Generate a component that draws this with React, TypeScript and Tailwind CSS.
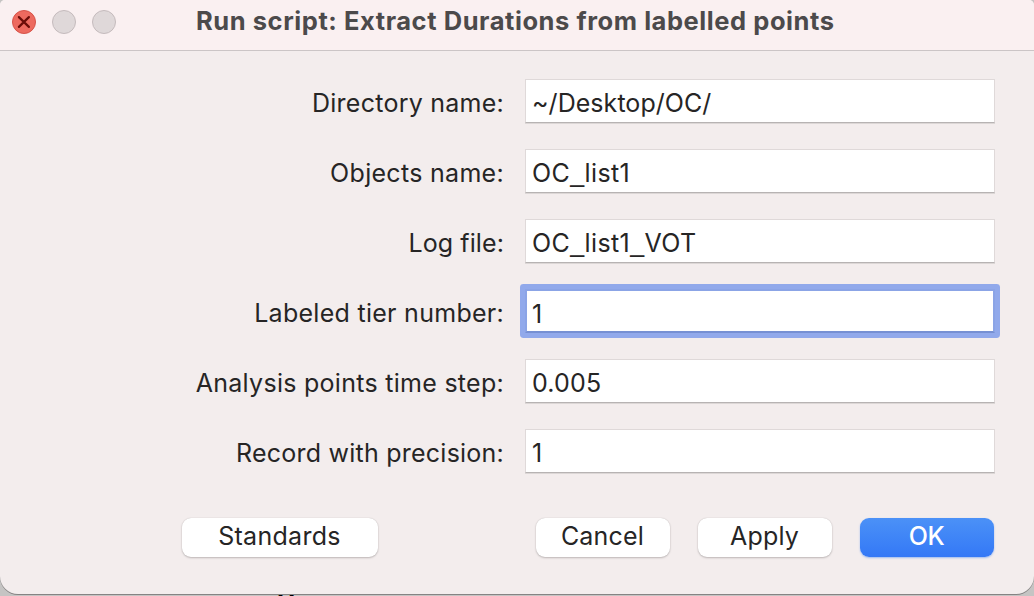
import type { ReactNode } from "react";
import clsx from "clsx";

type Field = { label: string; value: ReactNode; tracking: string; valueTracking: string; focused?: boolean };

function Underscore() {
  return <span className="font-['Liberation_Sans',sans-serif]">_</span>;
}

const fields: Field[] = [
  { label: "Directory name:", value: "~/Desktop/OC/", tracking: "tracking-[0.25px]", valueTracking: "tracking-[0.05px]" },
  { label: "Objects name:", value: <>OC<Underscore />list1</>, tracking: "tracking-[0.3px]", valueTracking: "tracking-[0.4px]" },
  { label: "Log file:", value: <>OC<Underscore />list1<Underscore />VOT</>, tracking: "tracking-[0.1px]", valueTracking: "tracking-[0.4px]" },
  { label: "Labeled tier number:", value: "1", tracking: "tracking-[0.28px]", valueTracking: "tracking-normal", focused: true },
  { label: "Analysis points time step:", value: "0.005", tracking: "tracking-[0.28px]", valueTracking: "tracking-[0.2px]" },
  { label: "Record with precision:", value: "1", tracking: "tracking-[0.23px]", valueTracking: "tracking-normal" },
];

function FieldRow({ label, value, tracking, valueTracking, focused }: Field) {
  return (
    <div className="flex h-11 items-center">
      <label className={clsx("w-[504px] text-right leading-[44px] whitespace-nowrap pt-[3px]", tracking)}>{label}</label>
      <div
        className={clsx(
          "ml-[21px] h-[44px] w-[470px] shrink-0 border bg-white leading-[46px] whitespace-nowrap",
          focused
            ? "rounded-[1px] border-2 border-[#8ba4e6] border-b-[#7690d3] pl-[5px] leading-[44px] shadow-[0_0_0_5px_#91a9eb]"
            : "border-[#dfd9d9] border-b-[#b7b3b3] pl-[6px] shadow-[0_1px_0_#dcd7d6]",
          valueTracking,
        )}
      >
        {value}
      </div>
    </div>
  );
}

function DialogButton({ children, className, primary }: { children: ReactNode; className: string; primary?: boolean }) {
  return (
    <button
      type="button"
      className={clsx(
        "h-[39px] shrink-0 rounded-[9px] pr-px pb-[2px] leading-[37px]",
        primary
          ? "bg-linear-to-b from-[#4b91f7] to-[#3478f6] font-medium text-white shadow-[0_1px_2px_#9dbbf0]"
          : "bg-white shadow-[0_0_1px_#bdb7b7,0_1px_2px_#bdb7b7]",
        className,
      )}
    >
      {children}
    </button>
  );
}

export default function App() {
  return (
    <div className="relative h-[596px] w-[1034px] overflow-hidden bg-[#c5c4c3] font-['Inter',sans-serif] text-[25px] font-[440] text-[#262525]">
      <div className="absolute top-[589px] left-[277px] text-[26px] leading-[26px] font-bold tracking-[3px] text-black">lf</div>
      <div className="relative flex h-[594px] flex-col overflow-hidden rounded-t-[5px] rounded-b-[18px] bg-[#f3eded] shadow-[0_1px_0_#858383]">
        <header className="flex h-[51px] shrink-0 border-b border-[#cbc5c6] bg-[#faf0f1]">
          <div className="flex gap-4 pt-[10px] pl-3">
            <svg className="size-6" viewBox="0 0 24 24">
              <circle cx="12" cy="12" r="11.5" fill="#ed6a5f" stroke="#d65349" />
              <path d="M6.9 7.1l10 9.8M16.9 7.1l-10 9.8" stroke="#6b0d08" strokeWidth="2.2" strokeLinecap="round" />
            </svg>
            <span className="size-6 rounded-full border border-[#c5bbbd] bg-[#dfd8d9]" />
            <span className="size-6 rounded-full border border-[#c5bbbd] bg-[#dfd8d9]" />
          </div>
          <h1 className="ml-[80px] text-[25.5px] leading-[42px] font-bold tracking-[0.56px] whitespace-nowrap text-[#4c4a4b]">
            Run script: Extract Durations from labelled points
          </h1>
        </header>
        <main className="flex flex-col gap-[26px] pt-7">
          {fields.map((field) => (
            <FieldRow key={field.label} {...field} />
          ))}
        </main>
        <footer className="flex pt-[44.5px] pl-[182px]">
          <DialogButton className="w-[196px] tracking-[0.3px]">Standards</DialogButton>
          <DialogButton className="ml-[158px] w-[134px] tracking-[0.2px]">Cancel</DialogButton>
          <DialogButton className="ml-[28px] w-[134px] tracking-[0.2px]">Apply</DialogButton>
          <DialogButton className="ml-[28px] w-[134px] tracking-[-0.5px]" primary>
            OK
          </DialogButton>
        </footer>
      </div>
    </div>
  );
}
